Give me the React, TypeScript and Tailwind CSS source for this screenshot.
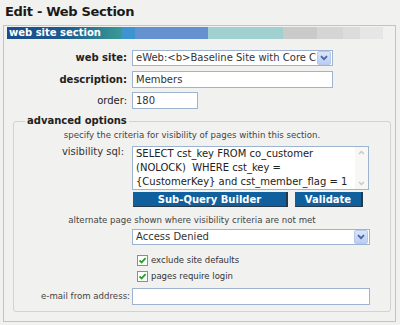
import React from "react";

// chevron used in the dropdown arrow boxes
function Arrow() {
    return (
        <span className="mr-[1px] flex h-[14px] w-[14px] items-center justify-center rounded-[2px] border border-[#b7c9ea] bg-gradient-to-b from-[#dae5fb] to-[#b9cdf4]">
            <svg width="8" height="6" viewBox="0 0 8 6" fill="none" stroke="#4a64a0" strokeWidth="1.8">
                <path d="M1 1.2L4 4.2L7 1.2" />
            </svg>
        </span>
    );
}

function Select({ value, width }: { value: string; width: string }) {
    return (
        <div className={`flex h-[16px] ${width} items-center border border-[#9db3cf] bg-white`}>
            <span className="flex-1 overflow-hidden whitespace-nowrap pl-[3px] text-[10px] leading-[14px] text-[#333]">
                {value}
            </span>
            <Arrow />
        </div>
    );
}

function Check({ label }: { label: string }) {
    return (
        <div className="ml-[123px] flex h-[11px] items-center gap-[3px]">
            <span className="flex h-[11px] w-[11px] items-center justify-center border border-[#7891ad] bg-white">
                <svg width="9" height="9" viewBox="0 0 9 9" fill="none" stroke="#25a325" strokeWidth="1.8">
                    <path d="M1.5 4.3L3.6 6.4L7.6 2.2" />
                </svg>
            </span>
            <span className="text-[8.5px] leading-[11px] text-[#333]">{label}</span>
        </div>
    );
}

function HeaderBar() {
    return (
        <div className="ml-[3px] flex h-[12px]">
            <div className="w-[115px] bg-gradient-to-r from-[#1b4b8b] via-[#1d5a8e] to-[#3b9a94] pl-[2px] text-[10px] font-bold leading-[12px] text-white">
                web site section
            </div>
            <div className="w-[13px] bg-[#3d94d0]" />
            <div className="w-[73px] bg-[#6592cf]" />
            <div className="w-[75px] bg-[#a0d0cf]" />
            <div className="w-[34px] bg-[#cacaca]" />
            <div className="w-[26px] bg-[#d5d5d5]" />
            <div className="w-[17px] bg-[#dcdcdc]" />
            <div className="w-[23px] bg-[#e6e6e6]" />
        </div>
    );
}

export default function App() {
    return (
        <div className="h-[325px] w-[400px] overflow-hidden bg-[#f1f1ef] font-['DejaVu_Sans',sans-serif] text-[#333]">
            {/* page title */}
            <div className="h-[25px] pl-[5px] pt-[4px] text-[13px] font-bold leading-[16px] tracking-[-0.3px] text-[#1a1a1a]">
                Edit - Web Section
            </div>

            <div className="ml-[3px] h-[297px] w-[393px] border border-[#c4c4c4] pt-[1px]">
                <HeaderBar />

                {/* web site */}
                <div className="mt-[11px] flex items-center">
                    <div className="w-[128px] pr-[5px] text-right text-[10px] font-bold leading-[12px] text-[#222]">web site:</div>
                    <Select value="eWeb:<b>Baseline Site with Core C" width="w-[201px]" />
                </div>

                {/* description */}
                <div className="mt-[5px] flex items-center">
                    <div className="w-[128px] pr-[5px] text-right text-[10px] font-bold leading-[12px] text-[#222]">description:</div>
                    <div className="h-[17px] w-[201px] border border-[#9db3cf] bg-white pl-[3px] text-[10px] leading-[15px]">Members</div>
                </div>

                {/* order */}
                <div className="mt-[4px] flex items-center">
                    <div className="w-[128px] pr-[5px] text-right text-[10px] leading-[12px] text-[#222]">order:</div>
                    <div className="h-[17px] w-[66px] border border-[#9db3cf] bg-white pl-[3px] text-[10px] leading-[15px]">180</div>
                </div>

                {/* advanced options */}
                <fieldset className="ml-[9px] mt-[6px] w-[378px] rounded-[3px] border border-[#d3d3cc] pb-[6px] pr-[20px]">
                    <legend className="ml-[11px] px-[2px] text-[10px] font-bold leading-[12px] text-[#222]">advanced options</legend>

                    <div className="mt-[3px] text-center text-[8.6px] leading-[11px] text-[#444]">
                        specify the criteria for visibility of pages within this section.
                    </div>

                    <div className="mt-[5px] flex items-start">
                        <div className="w-[118px] pr-[8px] pt-[1px] text-right text-[10px] leading-[10px] text-[#333]">visibility sql:</div>
                        <div className="flex h-[44px] w-[237px] border border-[#9db3cf] bg-white">
                            <div className="flex-1 whitespace-pre pl-[3px] text-[10px] leading-[14px] text-[#222]">
                                {"SELECT cst_key FROM co_customer\n(NOLOCK)  WHERE cst_key =\n{CustomerKey} and cst_member_flag = 1"}
                            </div>
                            <div className="flex w-[13px] flex-col items-center justify-between bg-[#f7f7f5] py-[3px]">
                                <svg width="7" height="5" viewBox="0 0 7 5" fill="none" stroke="#c8c8c8" strokeWidth="1.4">
                                    <path d="M1 4L3.5 1.5L6 4" />
                                </svg>
                                <svg width="7" height="5" viewBox="0 0 7 5" fill="none" stroke="#c8c8c8" strokeWidth="1.4">
                                    <path d="M1 1L3.5 3.5L6 1" />
                                </svg>
                            </div>
                        </div>
                    </div>

                    <div className="mt-[2px] flex gap-[7px] pl-[119px]">
                        <button className="h-[15px] w-[155px] border-b border-r-2 border-[#26384a] bg-[#10609e] text-[10px] font-bold leading-[13px] text-white">
                            Sub-Query Builder
                        </button>
                        <button className="h-[15px] w-[68px] border-b border-r-2 border-[#26384a] bg-[#10609e] text-[10px] font-bold leading-[13px] text-white">
                            Validate
                        </button>
                    </div>

                    <div className="mt-[8px] text-center text-[8.6px] leading-[11px] text-[#444]">
                        alternate page shown where visibility criteria are not met
                    </div>

                    <div className="ml-[118px] mt-[3px]">
                        <Select value="Access Denied" width="w-[238px]" />
                    </div>

                    <div className="mt-[10px]">
                        <Check label="exclude site defaults" />
                    </div>
                    <div className="mt-[5px]">
                        <Check label="pages require login" />
                    </div>

                    <div className="mt-[6px] flex items-center">
                        <div className="w-[118px] pr-[2px] text-right text-[8.6px] leading-[11px] text-[#444]">e-mail from address:</div>
                        <div className="h-[17px] w-[238px] border border-[#9db3cf] bg-white" />
                    </div>
                </fieldset>
            </div>
        </div>
    );
}
